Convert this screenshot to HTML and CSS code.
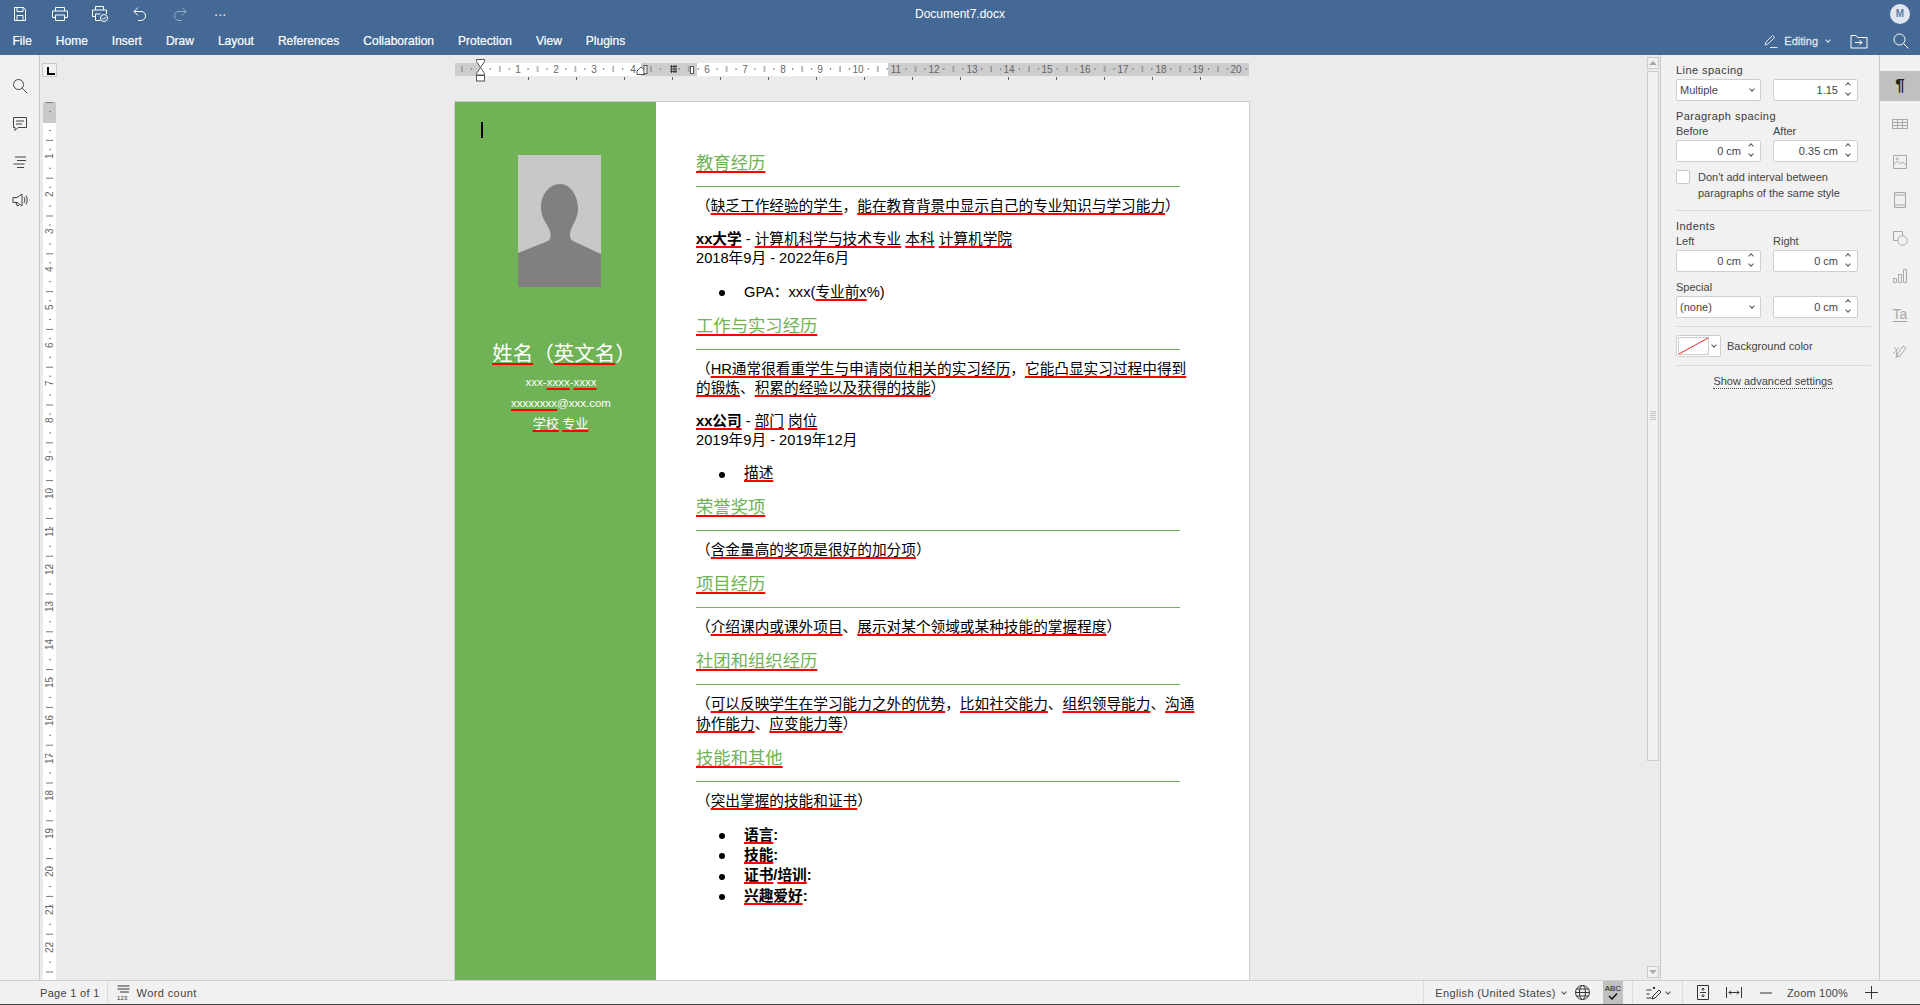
FILE: index.html
```html
<!DOCTYPE html>
<html lang="en">
<head>
<meta charset="utf-8">
<title>Document7.docx</title>
<link rel="stylesheet" href="styles.css">
</head>
<body>
<header class="topbar">
  <div class="title-row">
    <div class="quick">
      <span class="qbtn"><svg width="16" height="16" viewBox="0 0 16 16"><path d="M2.5 1.5h9l2 2v11h-11z M5 1.5v4h6v-4 M5 14.5v-5h6v5"/></svg></span>
      <span class="qbtn"><svg width="18" height="16" viewBox="0 0 18 16"><path d="M4.5 5V1.5h9V5 M4.5 11.5h-3V5h15v6.500h-3 M4.500 9h9v5.500h-9z"/></svg></span>
      <span class="qbtn"><svg width="18" height="18" viewBox="0 0 18 18"><path d="M4.500 5V1.500h8V5 M4.500 11.500h-3V5h14v4 M4.500 9h5 M4.500 9v6.500h5"/><circle cx="13" cy="13" r="3.500"/><path d="M11.500 13l1.200 1.200 2-2.200"/></svg></span>
      <span class="qbtn"><svg width="16" height="16" viewBox="0 0 16 16"><path d="M6 1.500L2 5.500l4 4 M2 5.500h7c3 0 4.500 2 4.500 4.500s-2 4.500-4.500 4.500H6"/></svg></span>
      <span class="qbtn dim"><svg width="16" height="16" viewBox="0 0 16 16"><path d="M10 1.500l4 4-4 4 M14 5.500H7C4 5.500 2.500 7.500 2.500 10s2 4.500 4.500 4.500h3"/></svg></span>
      <span class="qbtn dots">···</span>
    </div>
    <div class="doc-title">Document7.docx</div>
    <div class="account"><span class="avatar">M</span></div>
  </div>
  <div class="tab-row">
    <nav class="tabs">
      <span class="tab">File</span><span class="tab">Home</span><span class="tab">Insert</span><span class="tab">Draw</span><span class="tab">Layout</span><span class="tab">References</span><span class="tab">Collaboration</span><span class="tab">Protection</span><span class="tab">View</span><span class="tab">Plugins</span>
    </nav>
    <div class="tab-tools">
      <svg class="ico-edit" width="14" height="14" viewBox="0 0 14 14"><path d="M1 11l1-3 6.500-6.500 2 2L4 10z M6 13.500h7.500"/></svg>
      <span class="editing">Editing</span>
      <i class="chev light"></i>
      <svg class="ico-folder" width="18" height="15" viewBox="0 0 18 15"><path d="M1 14V1.500h5l1.500 2H17V14z M5 8.500h7 M9.500 6l2.500 2.500-2.500 2.500"/></svg>
      <svg class="ico-search" width="16" height="16" viewBox="0 0 16 16"><circle cx="6.500" cy="6.500" r="5.500"/><path d="M10.500 10.500l5 5"/></svg>
    </div>
  </div>
</header>

<main class="app">
  <aside class="rail">
    <svg width="16" height="16" viewBox="0 0 16 16"><circle cx="6.500" cy="6.500" r="5"/><path d="M10.200 10.200l5 5"/></svg>
    <svg width="16" height="16" viewBox="0 0 16 16"><path d="M1.500 1.500h13v10H6l-3 3v-3H1.500z M4 5h8 M4 8h6"/></svg>
    <svg width="16" height="16" viewBox="0 0 16 16"><path d="M3 3h11 M5 6.500h9 M1.500 10h11 M5 13.500h7"/></svg>
    <svg width="16" height="16" viewBox="0 0 16 16"><path d="M1 5.500h4L10 2v12L5 10.500H1z M4 10.500l1 3h2 M12 5c1 1.500 1 4.500 0 6 M14 3.500c1.500 2.500 1.500 6.500 0 9"/></svg>
  </aside>

  <div class="vcol">
    <div class="corner"><span class="corner-l"></span></div>
    <svg class="vruler" width="13" height="878" viewBox="0 0 13 878">
      <defs>
        <pattern id="vt" width="13" height="37.8" patternUnits="userSpaceOnUse" y="19">
          <rect x="6" y="9" width="2" height="1" fill="#777"/>
          <rect x="3" y="18.900" width="7" height="1" fill="#777"/>
          <rect x="6" y="28" width="2" height="1" fill="#777"/>
        </pattern>
      </defs>
      <rect width="13" height="878" fill="#fff"/>
      <rect width="13" height="21" fill="#c9c9c9"/>
      <rect width="13" height="878" fill="url(#vt)"/>
      <g class="rnum">
        <text transform="translate(10 57) rotate(-90)">1</text>
        <text transform="translate(10 95) rotate(-90)">2</text>
        <text transform="translate(10 132) rotate(-90)">3</text>
        <text transform="translate(10 170) rotate(-90)">4</text>
        <text transform="translate(10 208) rotate(-90)">5</text>
        <text transform="translate(10 246) rotate(-90)">6</text>
        <text transform="translate(10 284) rotate(-90)">7</text>
        <text transform="translate(10 321) rotate(-90)">8</text>
        <text transform="translate(10 359) rotate(-90)">9</text>
        <text transform="translate(10 397) rotate(-90)">10</text>
        <text transform="translate(10 435) rotate(-90)">11</text>
        <text transform="translate(10 473) rotate(-90)">12</text>
        <text transform="translate(10 510) rotate(-90)">13</text>
        <text transform="translate(10 548) rotate(-90)">14</text>
        <text transform="translate(10 586) rotate(-90)">15</text>
        <text transform="translate(10 624) rotate(-90)">16</text>
        <text transform="translate(10 662) rotate(-90)">17</text>
        <text transform="translate(10 699) rotate(-90)">18</text>
        <text transform="translate(10 737) rotate(-90)">19</text>
        <text transform="translate(10 775) rotate(-90)">20</text>
        <text transform="translate(10 813) rotate(-90)">21</text>
        <text transform="translate(10 851) rotate(-90)">22</text>
      </g>
    </svg>
  </div>

  <section class="workspace">
    <svg class="hruler" width="794" height="26" viewBox="0 0 794 26">
      <defs>
        <pattern id="ht" width="37.8" height="26" patternUnits="userSpaceOnUse" x="25.800">
          <rect x="9" y="10" width="1" height="2" fill="#777"/>
          <rect x="18.500" y="8" width="1" height="6" fill="#777"/>
          <rect x="28" y="10" width="1" height="2" fill="#777"/>
        </pattern>
        <pattern id="hb" width="48" height="26" patternUnits="userSpaceOnUse" x="25">
          <rect x="0" y="19" width="1" height="3" fill="#666"/>
        </pattern>
      </defs>
      <rect y="5" width="794" height="13" fill="#cdcdcd"/>
      <rect x="26" y="5" width="160" height="13" fill="#fff"/>
      <rect x="242" y="5" width="191" height="13" fill="#fff"/>
      <rect y="5" width="794" height="13" fill="url(#ht)"/>
      <rect x="48" y="18" width="710" height="6" fill="url(#hb)"/>
      <g class="rnum" text-anchor="middle">
        <text x="63" y="15">1</text><text x="101" y="15">2</text><text x="139" y="15">3</text><text x="178" y="15">4</text>
        <text x="252" y="15">6</text><text x="290" y="15">7</text><text x="328" y="15">8</text><text x="365" y="15">9</text><text x="403" y="15">10</text>
        <text x="441" y="15">11</text><text x="479" y="15">12</text><text x="517" y="15">13</text><text x="554" y="15">14</text><text x="592" y="15">15</text>
        <text x="630" y="15">16</text><text x="668" y="15">17</text><text x="706" y="15">18</text><text x="743" y="15">19</text><text x="781" y="15">20</text>
      </g>
      <g class="marks">
        <path d="M21.500 1.500h8v2l-4 6 4 6v1.500h-8V15.500l4-6-4-6z"/>
        <rect x="21.500" y="17.500" width="8" height="5.500"/>
        <path d="M182 16.500v-3.500l4-4 4 4v3.500z"/>
        <rect x="189" y="7.500" width="3" height="8"/>
        <rect x="235.500" y="8.500" width="3" height="7"/>
      </g>
      <path class="gridmark" d="M215 8.500h7 M215 11h7 M215 13.500h7 M216.500 7v8 M219 7v8 M221 7v8"/>
    </svg>

    <article class="page">
      <div class="side">
        <span class="caret"></span>
        <svg class="photo" width="83" height="132" viewBox="0 0 83 132">
          <rect width="83" height="132" fill="#c8c8c8"/>
          <path fill="#808080" d="M42 29C54 29 61 44 60 56C59 66 52 72 52 80C52 83 53 85 55 86L83 99V132H0V98L30 86C33 84 33 80 32 76C29 68 23 64 23 52C23 40 31 29 42 29Z"/>
        </svg>
        <h1 class="name"><span class="sp">姓名</span>（<span class="sp">英文名</span>）</h1>
        <p class="contact">xxx-<span class="sp">xxxx</span>-<span class="sp">xxxx</span></p>
        <p class="contact"><span class="sp">xxxxxxxx</span>@xxx.com</p>
        <p class="contact school"><span class="sp">学校</span> <span class="sp">专业</span></p>
      </div>
      <div class="body">
        <h2 class="first"><span class="sp">教育经历</span></h2>
        <p>（<span class="sp">缺乏工作经验的学生</span>，<span class="sp">能在教育背景中显示自己的专业知识与学习能力</span>）</p>
        <p class="gap"><b class="sp">xx大学</b> - <span class="sp">计算机科学与技术专业</span> <span class="sp">本科</span> <span class="sp">计算机学院</span><br>2018年9月 - 2022年6月</p>
        <ul><li>GPA：xxx(<span class="sp">专业前x</span>%)</li></ul>

        <h2><span class="sp">工作与实习经历</span></h2>
        <p>（<span class="sp">HR通常很看重学生与申请岗位相关的实习经历</span>，<span class="sp">它能凸显实习过程中得到</span><br><span class="sp">的锻炼</span>、<span class="sp">积累的经验以及获得的技能</span>）</p>
        <p class="gap"><b class="sp">xx公司</b> - <span class="sp">部门</span> <span class="sp">岗位</span><br>2019年9月 - 2019年12月</p>
        <ul><li><span class="sp">描述</span></li></ul>

        <h2><span class="sp">荣誉奖项</span></h2>
        <p>（<span class="sp">含金量高的奖项是很好的加分项</span>）</p>

        <h2><span class="sp">项目经历</span></h2>
        <p>（<span class="sp">介绍课内或课外项目</span>、<span class="sp">展示对某个领域或某种技能的掌握程度</span>）</p>

        <h2><span class="sp">社团和组织经历</span></h2>
        <p>（<span class="sp">可以反映学生在学习能力之外的优势</span>，<span class="sp">比如社交能力</span>、<span class="sp">组织领导能力</span>、<span class="sp">沟通</span><br><span class="sp">协作能力</span>、<span class="sp">应变能力等</span>）</p>

        <h2><span class="sp">技能和其他</span></h2>
        <p>（<span class="sp">突出掌握的技能和证书</span>）</p>
        <ul class="bold">
          <li><span class="sp">语言</span>:</li>
          <li><span class="sp">技能</span>:</li>
          <li><span class="sp">证书</span>/<span class="sp">培训</span>:</li>
          <li><span class="sp">兴趣爱好</span>:</li>
        </ul>
      </div>
    </article>
  </section>

  <div class="vscroll">
    <span class="sbtn"><i class="tri up"></i></span>
    <span class="thumb"><i class="grip"></i></span>
    <span class="strack"></span>
    <span class="sbtn"><i class="tri down"></i></span>
  </div>

  <aside class="panel">
    <div class="lbl strong">Line spacing</div>
    <div class="pair">
      <div class="field select">Multiple<i class="chev"></i></div>
      <div class="field num">1.15<span class="spin"><i></i><i></i></span></div>
    </div>
    <div class="lbl strong sec">Paragraph spacing</div>
    <div class="pair labels"><span>Before</span><span>After</span></div>
    <div class="pair">
      <div class="field num">0 cm<span class="spin"><i></i><i></i></span></div>
      <div class="field num">0.35 cm<span class="spin"><i></i><i></i></span></div>
    </div>
    <div class="check"><span class="box"></span><span>Don't add interval between<br>paragraphs of the same style</span></div>
    <hr class="sep">
    <div class="lbl strong sec">Indents</div>
    <div class="pair labels"><span>Left</span><span>Right</span></div>
    <div class="pair">
      <div class="field num">0 cm<span class="spin"><i></i><i></i></span></div>
      <div class="field num">0 cm<span class="spin"><i></i><i></i></span></div>
    </div>
    <div class="lbl sec">Special</div>
    <div class="pair">
      <div class="field select">(none)<i class="chev"></i></div>
      <div class="field num">0 cm<span class="spin"><i></i><i></i></span></div>
    </div>
    <hr class="sep tight">
    <div class="bgcolor">
      <span class="swatch">
        <svg width="31" height="18" viewBox="0 0 31 18"><rect x=".5" y=".5" width="30" height="17" fill="#fff" stroke="#ccc"/><path d="M1 17L30 1" stroke="#f0262e" fill="none"/></svg>
        <i class="chev"></i>
      </span>
      <span>Background color</span>
    </div>
    <hr class="sep tight">
    <div class="adv"><span>Show advanced settings</span></div>
  </aside>

  <aside class="tabsbar">
    <span class="ttab on"><span class="pilcrow">¶</span></span>
    <span class="ttab"><svg width="16" height="10" viewBox="0 0 16 10"><path d="M.5.500h15v9H.5z M.5 3.500h15 M.5 6.500h15 M5.500.500v9 M10.500.500v9"/></svg></span>
    <span class="ttab"><svg width="14" height="14" viewBox="0 0 14 14"><path d="M.5.500h13v13H.5z M.5 10l4-4 3 3 2-2 4 3"/><circle cx="4" cy="4" r="1"/></svg></span>
    <span class="ttab"><svg width="12" height="16" viewBox="0 0 12 16"><path d="M.5.500h11v15H.5z M.5 3h11 M.5 13h11"/></svg></span>
    <span class="ttab"><svg width="15" height="15" viewBox="0 0 15 15"><path d="M5 9.500H.5V.500h9V5"/><circle cx="9.500" cy="9.500" r="4.800"/></svg></span>
    <span class="ttab"><svg width="14" height="14" viewBox="0 0 14 14"><path d="M.5 9.500h3v4h-3z M5.500 5.500h3v8h-3z M10.500.500h3v13h-3z"/></svg></span>
    <span class="ttab ta">Ta</span>
    <span class="ttab"><svg width="16" height="16" viewBox="0 0 16 16"><path d="M11 2l3 2-6 8-3 1 .5-3z M2 3c3 2 3 6 2 11 M7 3C5 6 3 9 1 9"/></svg></span>
  </aside>
</main>

<footer class="status">
  <div class="st-left">
    <span class="st-page">Page 1 of 1</span>
    <span class="st-words">
      <svg width="13" height="15" viewBox="0 0 13 15"><path d="M.5 1h12 M.5 4h12 M3 7h9"/><text x="0" y="14.500" class="mini">123</text></svg>
      Word count
    </span>
  </div>
  <div class="st-right">
    <span class="st-lang">English (United States)<i class="chev"></i></span>
    <svg class="st-globe" width="15" height="15" viewBox="0 0 15 15"><circle cx="7.500" cy="7.500" r="7"/><ellipse cx="7.500" cy="7.500" rx="3" ry="7"/><path d="M.5 7.500h14 M1.500 4h12 M1.500 11h12"/></svg>
    <span class="st-abc"><span class="abc">ABC</span><svg width="10" height="7" viewBox="0 0 10 7"><path d="M1 3l3 3 5-5.500"/></svg></span>
    <span class="st-review">
      <svg width="16" height="15" viewBox="0 0 16 15"><path d="M.5 5h5 M.5 9h3 M.5 13h5 M7 2l2 2 M9 2L7 4 M13 5l2 2-6 6-3 1 1-3z"/></svg>
      <i class="chev"></i>
    </span>
    <span class="st-zoom">
      <svg width="12" height="15" viewBox="0 0 12 15"><path d="M.5.500h11v14H.5z M6 3v3 M6 9v3 M3 7.500h6 M4.500 4.500L6 3l1.500 1.500 M4.500 10.500L6 12l1.500-1.500"/></svg>
      <svg class="fitw" width="16" height="11" viewBox="0 0 16 11"><path d="M.5 0v11 M15.500 0v11 M3 5.500h10 M5 3.500l-2 2 2 2 M11 3.500l2 2-2 2"/></svg>
      <svg class="minus" width="12" height="2" viewBox="0 0 12 2"><path d="M0 1h12"/></svg>
      <span class="zoomtxt">Zoom 100%</span>
      <svg class="plus" width="13" height="13" viewBox="0 0 13 13"><path d="M0 6.500h13 M6.500 0v13"/></svg>
    </span>
  </div>
</footer>
</body>
</html>
```

FILE: styles.css
```css
* { box-sizing: border-box; }
html, body { margin: 0; height: 100%; }
body {
  width: 1920px;
  height: 1005px;
  overflow: hidden;
  display: flex;
  flex-direction: column;
  font: 11px "Liberation Sans", "Noto Sans CJK SC", sans-serif;
  color: #444;
  background: #f1f1f1;
}
i { display: block; font-style: normal; }

/* top bar */
.topbar { height: 55px; flex: none; background: #446995; color: #fff; }
.topbar svg { fill: none; stroke: #fff; stroke-width: 1; }
.title-row { height: 27px; display: grid; grid-template-columns: 1fr auto 1fr; align-items: center; }
.quick { display: flex; }
.qbtn { width: 40px; display: flex; justify-content: center; align-items: center; height: 27px; }
.qbtn.dim { opacity: .45; }
.dots { font-size: 14px; opacity: .85; letter-spacing: -.5px; }
.doc-title { font-size: 12px; }
.account { display: flex; justify-content: flex-end; padding-right: 10px; }
.avatar {
  width: 20px; height: 20px; border-radius: 50%;
  background: #dfe6ef; color: #5d7da5;
  font-size: 10px; font-weight: bold;
  display: flex; align-items: center; justify-content: center;
}
.tab-row { height: 28px; display: flex; justify-content: space-between; align-items: center; }
.tabs { display: flex; }
.tab { padding: 0 12px; font-size: 12px; -webkit-text-stroke: .2px #fff; }
.tab:first-child { padding-left: 12.500px; }
.tab-tools { display: flex; align-items: center; padding-right: 11px; }
.topbar .ico-edit { stroke: #dfe6ef; margin-right: 0; }
.editing { margin-left: 6px; color: #dbe3ed; font-size: 11px; -webkit-text-stroke: .3px #dbe3ed; }
.ico-folder { margin-left: 20px; }
.ico-search { margin-left: 25px; }

.chev {
  width: 4px; height: 4px;
  border-right: 1px solid #555; border-bottom: 1px solid #555;
  transform: rotate(45deg);
}
.chev.light { border-color: #dfe6ef; margin-left: 8px; margin-top: -2px; }

/* main row */
.app { flex: 1; min-height: 0; display: flex; }
.rail {
  width: 40px; flex: none;
  border-right: 1px solid #c9c9c9;
  display: flex; flex-direction: column; align-items: center;
  gap: 22px; padding-top: 23px;
  background: #f1f1f1;
}
.rail svg { fill: none; stroke: #444; stroke-width: 1; }

.vcol { width: 18px; flex: none; padding: 8px 2px 0 3px; background: #ebebeb; }
.corner { height: 39px; }
.corner-l {
  display: block; width: 15px; height: 14px; margin-left: -1px;
  border: 1px solid #c9c9c9; background: #f1f1f1; position: relative;
}
.corner-l::after {
  content: ""; position: absolute; left: 4px; top: 3px;
  width: 6px; height: 6px;
  border-left: 2px solid #000; border-bottom: 2px solid #000;
}
.vruler { display: block; }
.rnum text, .rnum { font: 10px "Liberation Sans", sans-serif; fill: #666; }

.workspace {
  flex: 1; min-width: 0;
  background: #ebebeb;
  display: flex; flex-direction: column; align-items: center;
  padding-top: 3px; overflow: hidden;
}
.hruler { display: block; flex: none; margin-bottom: 18px; }
.marks { fill: #fff; stroke: #555; stroke-width: 1; }
.gridmark { fill: none; stroke: #444; stroke-width: 1; }

.page {
  flex: none; width: 794px; height: 878px;
  display: flex;
  background: #fff;
  box-shadow: 0 0 0 1px #ccc;
  color: #000;
  font: 14.670px/19.200px "Liberation Sans", "Noto Sans CJK SC", sans-serif;
}
.side {
  width: 201px; flex: none;
  background: #70b256; color: #fff;
  display: flex; flex-direction: column; align-items: center;
  padding-left: 8px; position: relative;
}
.caret { position: absolute; left: 26px; top: 20px; width: 2px; height: 16px; background: #000; }
.photo { display: block; margin-top: 53px; flex: none; }
.name { margin: 54px 0 0 9px; font-weight: normal; font-size: 20.500px; line-height: 26px; }
.contact { margin: 7px 0 0 3px; font-size: 11.500px; line-height: 14px; }
.name + .contact { margin-top: 8px; }
.school { font-size: 13px; margin-left: 2px; }
.sp {
  text-decoration: underline solid #f00 2px;
  text-decoration-skip-ink: none;
  text-underline-offset: 2px;
}
.body { flex: 1; padding: 49px 0 0 40px; min-width: 0; }
h2 {
  margin: 11.800px 0 10px; width: 484px; padding-bottom: 11px;
  border-bottom: 1px solid #70b256;
  color: #70b256; font-size: 17.330px; line-height: 24px; font-weight: normal;
}
h2.first { margin-top: 0; }
.body p { margin: 0; white-space: nowrap; }
.body p.gap { margin-top: 14px; }
ul { margin: 14px 0 0; padding: 0 0 0 48px; list-style: none; }
li::before {
  content: ""; display: inline-block; vertical-align: middle;
  width: 6px; height: 6px; border-radius: 50%; background: #000;
  margin: 0 19px 0 -25px;
}
ul.bold { font-weight: bold; }
ul.bold li { line-height: 20.300px; }

/* scrollbar */
.vscroll {
  width: 14px; flex: none; background: #ebebeb;
  display: flex; flex-direction: column; align-items: center;
  padding: 2px 1px 2px 0; gap: 2px;
}
.sbtn { width: 12px; height: 12px; flex: none; border: 1px solid #ccc; display: flex; align-items: center; justify-content: center; background: #f1f1f1; }
.tri { width: 0; height: 0; border-left: 4px solid transparent; border-right: 4px solid transparent; }
.tri.up { border-bottom: 4px solid #aaa; }
.tri.down { border-top: 4px solid #aaa; }
.thumb { width: 12px; height: 690px; flex: none; border: 1px solid #ccc; background: #f1f1f1; display: flex; align-items: center; justify-content: center; }
.grip { width: 6px; height: 10px; background: repeating-linear-gradient(#c4c4c4 0 1px, transparent 1px 2px); }
.strack { flex: 1; }

/* right panel */
.panel {
  width: 220px; flex: none;
  border-left: 1px solid #c9c9c9; border-right: 1px solid #c9c9c9;
  padding: 8px 9px 0 15px;
  background: #f1f1f1;
  color: #444;
}
.lbl { line-height: 14px; }
.lbl.strong { letter-spacing: .45px; color: #3a3a3a; }
.lbl.sec { margin-top: 8px; }
.pair { display: grid; grid-template-columns: 85px 85px; gap: 12px; margin-top: 2px; }
.pair.labels { margin-top: 1px; line-height: 14px; }
.field {
  position: relative; height: 22px;
  border: 1px solid #cfcfcf; border-radius: 2px;
  background: #fff; line-height: 20px; color: #444;
}
.select { padding-left: 3px; }
.select .chev { position: absolute; right: 6px; top: 7px; }
.num { text-align: right; padding-right: 19px; }
.spin { position: absolute; right: 5px; top: 3px; width: 8px; height: 14px; display: flex; flex-direction: column; align-items: center; gap: 4px; }
.spin i { width: 4px; height: 4px; border-left: 1px solid #555; border-top: 1px solid #555; transform: rotate(45deg); }
.spin i + i { transform: rotate(225deg); }
.check { display: flex; gap: 8px; margin-top: 7px; line-height: 16px; }
.box { width: 14px; height: 14px; flex: none; border: 1px solid #c9c9c9; border-radius: 2px; background: #fff; margin-top: 1px; }
.sep { height: 1px; border: 0; background: #dcdcdc; margin: 9px -1px 0 0; }
.sep.tight { margin-top: 8px; }
.sep + .lbl { margin-top: 8px; }
.bgcolor { display: flex; align-items: center; gap: 6px; height: 22px; margin-top: 8px; }
.swatch {
  position: relative; width: 45px; height: 22px;
  border: 1px solid #cfcfcf; border-radius: 2px; background: #fff;
  padding: 1px;
}
.swatch svg { display: block; }
.swatch .chev { position: absolute; right: 4px; top: 7px; }
.adv { text-align: center; margin-top: 8px; }
.adv span { display: inline-block; line-height: 14px; border-bottom: 1px dotted #444; }

.tabsbar { width: 40px; flex: none; padding-top: 16px; display: flex; flex-direction: column; background: #f1f1f1; }
.ttab { height: 30px; margin-bottom: 8px; display: flex; align-items: center; justify-content: center; flex: none; }
.ttab svg { fill: none; stroke: #a9a9a9; stroke-width: 1; }
.ttab.on { background: #c0c0c0; }
.pilcrow { font-size: 17px; color: #222; font-weight: bold; }
.ta { color: #a9a9a9; font-size: 14px; text-decoration: underline; text-underline-offset: 2px; }

/* status bar */
.status {
  height: 25px; flex: none;
  display: flex; justify-content: space-between;
  border-top: 1px solid #cfcfcf; border-bottom: 1px solid #444;
  background: #f1f1f1; color: #444;
  letter-spacing: .3px;
}
.status svg { fill: none; stroke: #333; stroke-width: 1; flex: none; }
.st-left, .st-right, .st-lang, .st-words, .st-abc, .st-review, .st-zoom { display: flex; align-items: center; }
.st-page { padding: 0 7px 0 40px; height: 100%; display: flex; align-items: center; border-right: 1px solid #dcdcdc; }
.st-words { padding-left: 9px; gap: 7px; letter-spacing: .4px; }
.mini { font: 6px "Liberation Sans", sans-serif; fill: #333; stroke: none; letter-spacing: .2px; }
.st-right { height: 100%; padding-right: 42px; }
.st-lang { height: 100%; padding-left: 11px; border-left: 1px solid #dcdcdc; gap: 6px; letter-spacing: .35px; }
.st-lang .chev { margin-top: -2px; }
.st-globe { margin-left: 9px; }
.st-abc { flex-direction: column; justify-content: center; width: 20px; height: 100%; background: #c0c0c0; margin-left: 13px; line-height: 8px; }
.abc { font-size: 8px; color: #222; line-height: 8px; letter-spacing: 0; }
.st-abc svg { stroke: #111; stroke-width: 1.500; }
.st-review { height: 100%; margin-left: 9px; padding-left: 13px; gap: 4px; border-left: 1px solid #dcdcdc; padding-right: 12px; border-right: 1px solid #dcdcdc; }
.st-review .chev { margin-top: -2px; }
.st-zoom { padding-left: 14px; }
.fitw { margin-left: 17px; }
.minus { margin-left: 18px; }
.zoomtxt { margin-left: 15px; letter-spacing: .2px; }
.plus { margin-left: 17px; }
```
